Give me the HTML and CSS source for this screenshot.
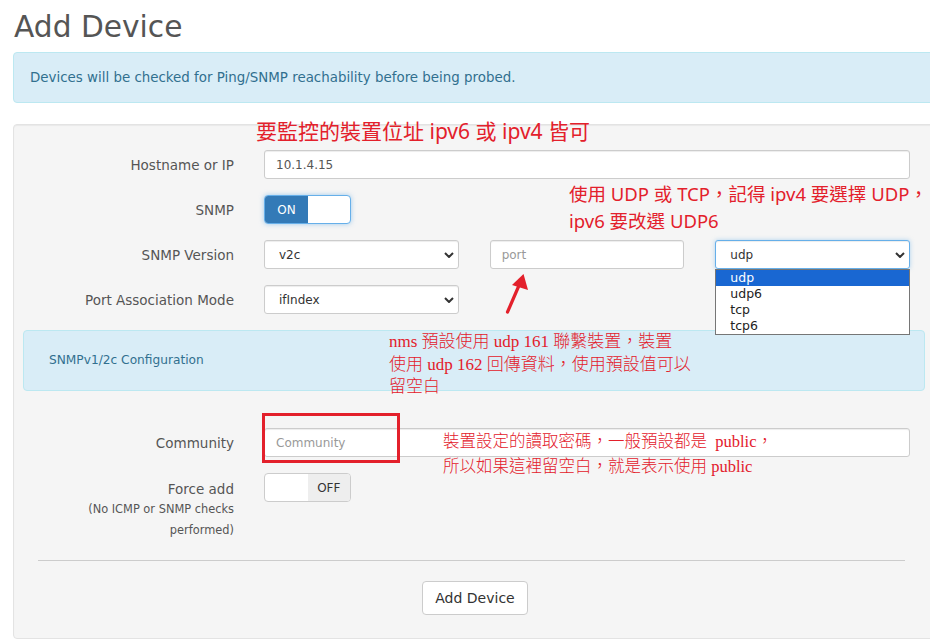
FILE: index.html
```html
<!DOCTYPE html>
<html lang="zh-Hant">
<head>
<meta charset="utf-8">
<title>Add Device</title>
<link rel="stylesheet" href="styles.css">
</head>
<body>
<div class="page">
  <h1 class="title">Add Device</h1>
  <div class="alert">Devices will be checked for Ping/SNMP reachability before being probed.</div>

  <div class="panel">
    <div class="row">
      <label class="lbl">Hostname or IP</label>
      <div class="ctl"><input class="input" value="10.1.4.15"></div>
    </div>
    <div class="row">
      <label class="lbl">SNMP</label>
      <div class="ctl">
        <div class="switch focus"><span class="sw-on">ON</span><span class="sw-blank"></span></div>
      </div>
    </div>
    <div class="row">
      <label class="lbl">SNMP Version</label>
      <div class="ctl triple">
        <div class="sel">
          <select class="input select"><option>v2c</option></select>
          <svg class="chev" viewBox="0 0 10 6" width="10" height="6"><path d="M1 1l4 4 4-4" fill="none" stroke="#333" stroke-width="2"/></svg>
        </div>
        <input class="input" placeholder="port">
        <div class="sel">
          <select class="input select focused"><option>udp</option></select>
          <svg class="chev" viewBox="0 0 10 6" width="10" height="6"><path d="M1 1l4 4 4-4" fill="none" stroke="#333" stroke-width="2"/></svg>
          <ul class="dropdown">
            <li class="picked">udp</li>
            <li>udp6</li>
            <li>tcp</li>
            <li>tcp6</li>
          </ul>
        </div>
      </div>
    </div>
    <div class="row">
      <label class="lbl">Port Association Mode</label>
      <div class="ctl">
        <div class="sel narrow">
          <select class="input select"><option>ifIndex</option></select>
          <svg class="chev" viewBox="0 0 10 6" width="10" height="6"><path d="M1 1l4 4 4-4" fill="none" stroke="#333" stroke-width="2"/></svg>
        </div>
      </div>
    </div>

    <div class="config">SNMPv1/2c Configuration</div>

    <div class="row">
      <label class="lbl">Community</label>
      <div class="ctl"><input class="input" placeholder="Community"></div>
    </div>
    <div class="row top last">
      <label class="lbl force">Force add<small>(No ICMP or SNMP checks<br>performed)</small></label>
      <div class="ctl">
        <div class="switch"><span class="sw-blank"></span><span class="sw-off">OFF</span></div>
      </div>
    </div>

    <hr class="rule">
    <div class="actions"><button class="btn">Add Device</button></div>
  </div>

  <div class="note n1">要監控的裝置位址 ipv6 或 ipv4 皆可</div>
  <div class="note n2">使用 UDP 或 TCP，記得 ipv4 要選擇 UDP，<br>ipv6 要改選 UDP6</div>
  <div class="note serif n3">nms 預設使用 udp 161 聯繫裝置，裝置<br>使用 udp 162 回傳資料，使用預設值可以<br>留空白</div>
  <div class="note serif n4">裝置設定的讀取密碼，一般預設都是&nbsp; public，<br>所以如果這裡留空白，就是表示使用 public</div>
  <div class="mark"></div>
  <svg class="arrow" viewBox="0 0 40 50" width="40" height="50">
    <path d="M7.5 44L20.5 14" stroke="#e3202b" stroke-width="3.2" stroke-linecap="round" fill="none"/>
    <path d="M23.5 6L28 22L12 17Z" fill="#e3202b"/>
  </svg>
</div>
</body>
</html>
```
FILE: styles.css
```css
html, body {
  margin: 0;
  overflow: hidden;
}
body {
  font-family: "DejaVu Sans", Verdana, sans-serif;
  color: #333;
  background: #fff;
}
.page {
  position: relative;
  display: flow-root;
  width: 924px;
  margin-left: 13px;
}
.title {
  margin: 10px 0 9px 1px;
  font-size: 29.7px;
  font-weight: 400;
  line-height: 33px;
  color: #555;
}
.alert {
  padding: 15px 16px;
  border: 1px solid #bce8f1;
  border-radius: 4px;
  background: #d9edf7;
  color: #31708f;
  font-size: 13.4px;
  line-height: 19px;
  margin-bottom: 21px;
}
.panel {
  border: 1px solid #e3e3e3;
  border-radius: 4px;
  background: #f5f5f5;
  box-shadow: inset 0 1px 1px rgba(0, 0, 0, .05);
  padding: 25px 0 23px;
}
.row {
  display: grid;
  grid-template-columns: 220px 646px;
  column-gap: 30px;
  align-items: center;
  margin-bottom: 16px;
}
.row.top { align-items: start; }
.row.last { margin-bottom: 0; }
.lbl {
  text-align: right;
  font-size: 13.5px;
  color: #555;
}
.lbl.force {
  padding-top: 6px;
  line-height: 20px;
}
.lbl.force small {
  display: block;
  font-size: 11.4px;
  line-height: 21px;
}
.input {
  display: block;
  box-sizing: border-box;
  width: 100%;
  height: 29px;
  margin: 0;
  border: 1px solid #ccc;
  border-radius: 3px;
  background: #fff;
  padding: 0 11px;
  font-family: "DejaVu Sans", Verdana, sans-serif;
  font-size: 12px;
  color: #555;
  box-shadow: inset 0 1px 1px rgba(0, 0, 0, .075);
  outline: none;
}
.input::placeholder { color: #999; }
.select {
  appearance: none;
  -webkit-appearance: none;
  padding-left: 14px;
  color: #333;
}
.select.focused {
  border-color: #66afe9;
  box-shadow: inset 0 1px 1px rgba(0, 0, 0, .075), 0 0 4px rgba(102, 175, 233, .5);
}
.sel { position: relative; }
.narrow { width: 195px; }
.chev {
  position: absolute;
  right: 5px;
  top: 12px;
}
.triple {
  display: grid;
  grid-template-columns: repeat(3, 1fr);
  column-gap: 31px;
}
.dropdown {
  position: absolute;
  left: 0;
  top: 29px;
  width: 100%;
  box-sizing: border-box;
  margin: 0;
  padding: 0;
  list-style: none;
  border: 1px solid #767676;
  background: #fff;
  font-size: 12.5px;
  line-height: 16px;
  color: #222;
  z-index: 2;
}
.dropdown li { padding-left: 14px; }
.dropdown li.picked {
  background: #1967d2;
  color: #fff;
}
.switch {
  box-sizing: border-box;
  width: 87px;
  height: 29px;
  display: flex;
  border: 1px solid #ccc;
  border-radius: 4px;
  overflow: hidden;
  background: #fff;
  font-size: 12px;
}
.switch.focus {
  border-color: #66afe9;
  box-shadow: 0 0 5px rgba(102, 175, 233, .6);
}
.sw-on, .sw-off, .sw-blank {
  width: 43px;
  display: flex;
  align-items: center;
  justify-content: center;
}
.sw-on {
  background: #337ab7;
  color: #fff;
}
.sw-off {
  flex: 1;
  background: #eee;
  color: #333;
}
.sw-blank { flex: 1; }
.config {
  margin: 0 11px 37px 9px;
  padding: 20px 25px;
  border: 1px solid #bce8f1;
  border-radius: 4px;
  background: #d9edf7;
  color: #31708f;
  font-size: 12.2px;
  line-height: 19px;
}
.rule {
  height: 0;
  margin: 19px 31px 0 24px;
  border: 0;
  border-top: 1px solid #ccc;
}
.actions {
  margin-top: 20px;
  text-align: center;
}
.btn {
  box-sizing: border-box;
  height: 34px;
  padding: 0 12px;
  border: 1px solid #ccc;
  border-radius: 4px;
  background: #fff;
  color: #333;
  font-family: "DejaVu Sans", Verdana, sans-serif;
  font-size: 14px;
}
.note {
  position: absolute;
  color: #e3202b;
  font-family: "Noto Sans", "Noto Sans CJK TC", sans-serif;
  white-space: nowrap;
  z-index: 3;
}
.note.serif {
  font-family: "Liberation Serif", "Noto Sans CJK TC", serif;
  font-weight: 300;
}
.n1 {
  left: 243px;
  top: 116px;
  font-size: 21px;
  line-height: 30px;
}
.n2 {
  left: 556px;
  top: 180px;
  font-size: 18.5px;
  line-height: 27px;
}
.n3 {
  left: 376px;
  top: 331px;
  font-size: 17px;
  line-height: 22.5px;
}
.n4 {
  left: 430px;
  top: 429px;
  font-size: 16.5px;
  line-height: 25px;
}
.mark {
  position: absolute;
  left: 249px;
  top: 413px;
  width: 138px;
  height: 50px;
  box-sizing: border-box;
  border: 3px solid #e3202b;
  z-index: 3;
}
.arrow {
  position: absolute;
  left: 487px;
  top: 268px;
  z-index: 3;
}
```
